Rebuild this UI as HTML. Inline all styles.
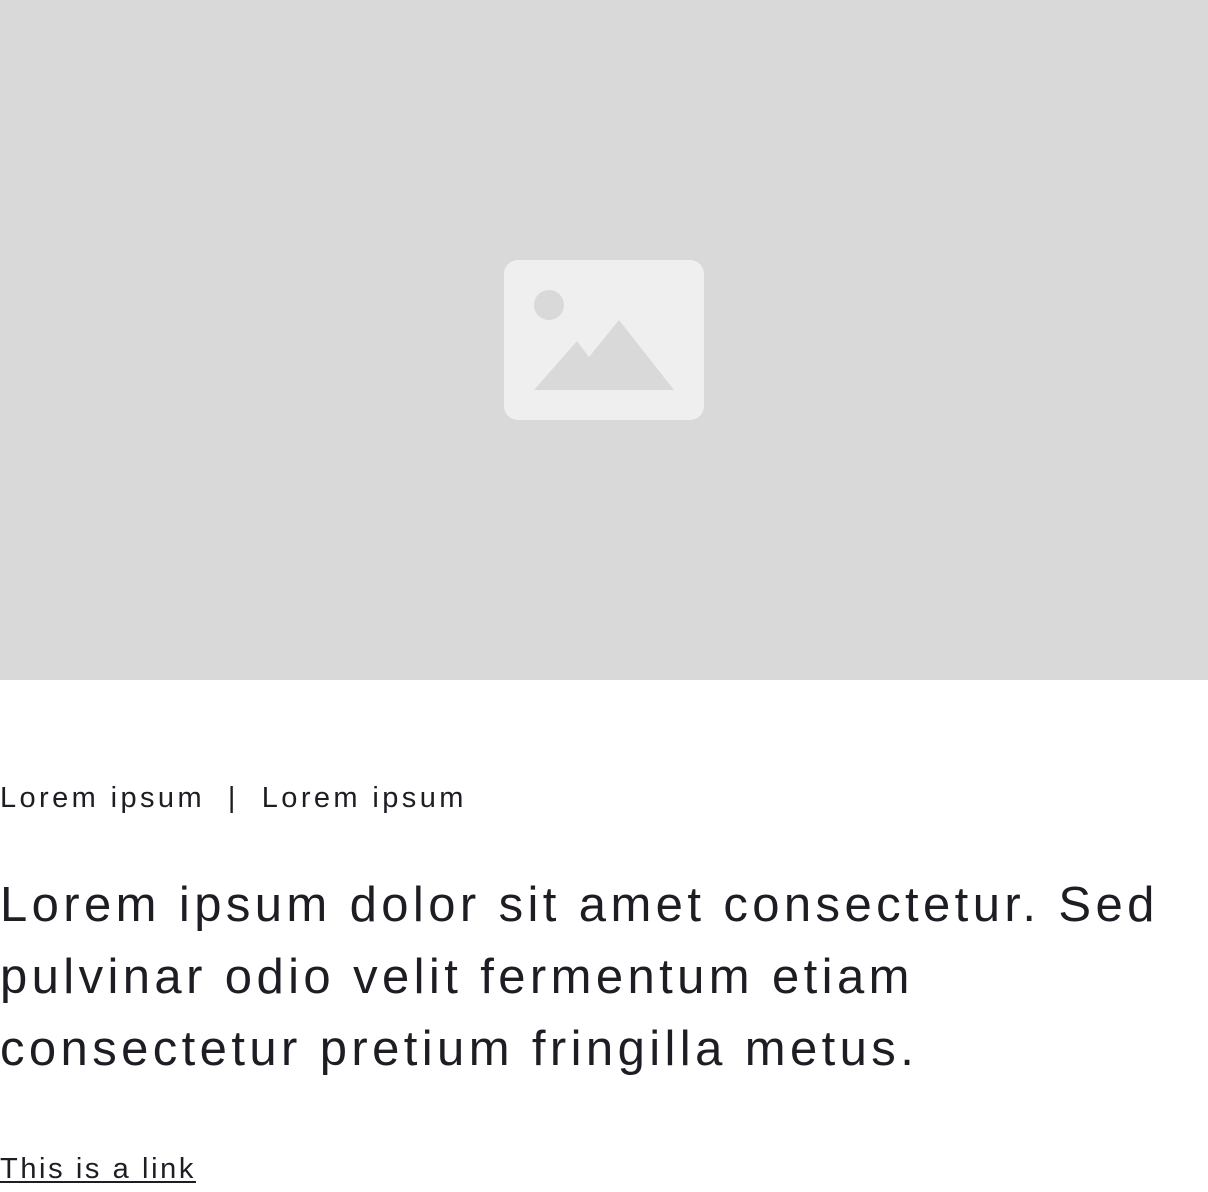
<!DOCTYPE html>
<html><head><meta charset="utf-8"><style>
html,body{margin:0;padding:0;background:#fff;width:1208px;height:1192px;overflow:hidden;font-family:"Liberation Sans",sans-serif;color:#1d1d24}
.img{position:absolute;left:0;top:0;width:1208px;height:680px;background:#d9d9d9}
.meta{position:absolute;left:0;top:780px;font-size:29px;line-height:36px;letter-spacing:3.4px;white-space:nowrap}
.h{position:absolute;left:0;top:869px;font-size:49px;line-height:72px;letter-spacing:4.4px;white-space:nowrap}
.link{position:absolute;left:0;top:1151px;font-size:29px;line-height:36px;letter-spacing:2.6px;color:#1d1d24;text-decoration:underline;text-decoration-thickness:2px;text-underline-offset:3px}
</style></head><body>
<div class="img">
<svg width="1208" height="680" viewBox="0 0 1208 680">
<rect x="504" y="260" width="200" height="160" rx="14" fill="#efefef"/>
<circle cx="549" cy="305" r="15" fill="#d9d9d9"/>
<path d="M534 390 L577 341 L589 357 L619 320 L674 390 Z" fill="#d9d9d9"/>
</svg>
</div>
<div class="meta">Lorem ipsum &nbsp;|&nbsp; Lorem ipsum</div>
<div class="h">Lorem ipsum dolor sit amet consectetur. Sed<br>pulvinar odio velit fermentum etiam<br>consectetur pretium fringilla metus.</div>
<a class="link">This is a link</a>
</body></html>
